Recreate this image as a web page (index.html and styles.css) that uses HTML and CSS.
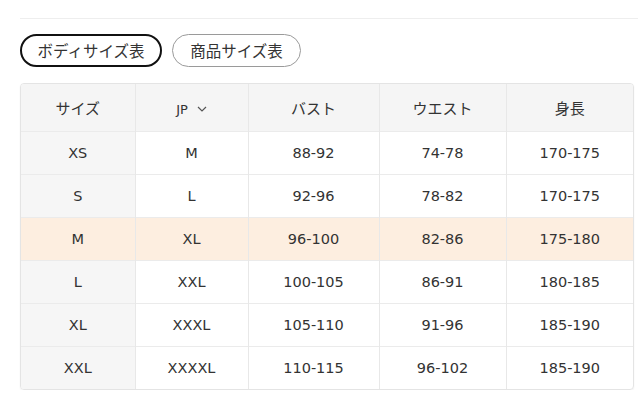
FILE: index.html
```html
<!DOCTYPE html>
<html lang="ja">
<head>
<meta charset="utf-8">
<link rel="stylesheet" href="styles.css">
</head>
<body>
<div class="page">
  <div class="rule"></div>
  <div class="tabs">
    <button class="tab tab-active">ボディサイズ表</button>
    <button class="tab">商品サイズ表</button>
  </div>
  <div class="table-wrap">
    <table class="sizes">
      <colgroup>
        <col class="c1"><col class="c2"><col class="c3"><col class="c4"><col class="c5">
      </colgroup>
      <thead>
        <tr>
          <th>サイズ</th>
          <th><span class="jp">JP</span><svg class="chev" width="10" height="6" viewBox="0 0 10 6"><path d="M1 1l4 4 4-4" fill="none" stroke="#555" stroke-width="1.2"/></svg></th>
          <th>バスト</th>
          <th>ウエスト</th>
          <th>身長</th>
        </tr>
      </thead>
      <tbody>
        <tr><td class="first">XS</td><td>M</td><td>88-92</td><td>74-78</td><td>170-175</td></tr>
        <tr><td class="first">S</td><td>L</td><td>92-96</td><td>78-82</td><td>170-175</td></tr>
        <tr class="hl"><td class="first">M</td><td>XL</td><td>96-100</td><td>82-86</td><td>175-180</td></tr>
        <tr><td class="first">L</td><td>XXL</td><td>100-105</td><td>86-91</td><td>180-185</td></tr>
        <tr><td class="first">XL</td><td>XXXL</td><td>105-110</td><td>91-96</td><td>185-190</td></tr>
        <tr><td class="first">XXL</td><td>XXXXL</td><td>110-115</td><td>96-102</td><td>185-190</td></tr>
      </tbody>
    </table>
  </div>
</div>
</body>
</html>
```

FILE: styles.css
```css
html, body {
  margin: 0;
  padding: 0;
  background: #fff;
}
body {
  font-family: "Noto Sans CJK JP", "DejaVu Sans", sans-serif;
  color: #333;
}
.page {
  width: 614px;
  margin-left: 20px;
  padding-top: 18px;
}
.rule {
  height: 1px;
  background: #eeeeee;
  margin-right: -4px;
}
.tabs {
  display: flex;
  gap: 10px;
  margin-top: 15px;
}
.tab {
  height: 33px;
  border-radius: 17px;
  background: #fff;
  font-family: "Noto Sans CJK JP", sans-serif;
  font-size: 15.5px;
  color: #333;
  padding: 0;
  border: 1px solid #9a9a9a;
  width: 129px;
  line-height: 31px;
}
.tab-active {
  border: 2px solid #111;
  width: 142px;
  line-height: 29px;
}
.table-wrap {
  margin-top: 16px;
  border: 1px solid #e4e4e4;
  border-radius: 4px;
  overflow: hidden;
  box-shadow: 0 1px 2px rgba(0,0,0,0.06);
}
.sizes {
  width: 100%;
  border-collapse: collapse;
  table-layout: fixed;
}
.c1 { width: 114px; }
.c2 { width: 113px; }
.c3 { width: 131px; }
.c4 { width: 127px; }
.c5 { width: auto; }
.sizes th, .sizes td {
  text-align: center;
  font-weight: normal;
  color: #333;
  border-left: 1px solid #e8e8e8;
  border-top: 1px solid #ebebeb;
  padding: 0;
}
.sizes th:first-child, .sizes td:first-child {
  border-left: none;
}
.sizes thead th {
  border-top: none;
  background: #f5f5f5;
  height: 47px;
  font-size: 15px;
  font-family: "Noto Sans CJK JP", sans-serif;
}
.sizes td {
  height: 42px;
  font-family: "DejaVu Sans", "Noto Sans CJK JP", sans-serif;
  font-size: 14.5px;
}
.sizes td.first {
  background: #f6f6f6;
}
.sizes tr.hl td {
  background: #fdeee0;
}
.jp {
  font-family: "DejaVu Sans", sans-serif;
  font-size: 13px;
}
.chev {
  margin-left: 9px;
  vertical-align: 2px;
}
```
